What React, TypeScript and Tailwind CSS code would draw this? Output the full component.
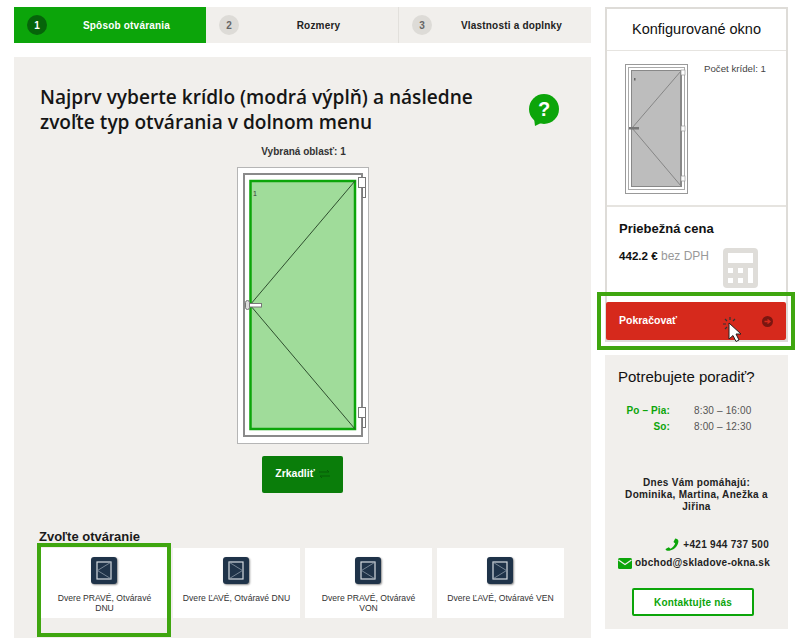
import React from "react";

const GREEN = "#0ca50a";

function Step({ n, label, active, wide }: { n: number; label: string; active?: boolean; wide?: boolean }) {
  return (
    <div className={active ? "flex items-center h-full w-[192px] pl-[13px] pt-[1px] bg-[#0ca50a] text-white" : wide ? "flex items-center h-full flex-1 pl-[13px] pt-[1px] bg-[#f1efec] text-[#222] border-l border-[#e2e0dc]" : "flex items-center h-full w-[192px] pl-[13px] pt-[1px] bg-[#f1efec] text-[#222]"}>
      <div className={active ? "w-[20px] h-[20px] rounded-full bg-[#06640a] flex items-center justify-center text-[10px] font-bold text-white" : "w-[20px] h-[20px] rounded-full bg-[#dddbd7] flex items-center justify-center text-[10px] font-bold text-[#666]"}>{n}</div>
      <div className="flex-1 text-center text-[10px] font-bold tracking-[0.2px]">{label}</div>
    </div>
  );
}

function BigDoor() {
  return (
    <svg width="132" height="277" viewBox="0 0 132 277" className="block">
      <rect x="0.5" y="0.5" width="131" height="276" fill="#fff" stroke="#b5b5b5" />
      <rect x="7" y="7" width="118" height="262" fill="#fff" stroke="#8a8a8a" strokeWidth="2" />
      <rect x="13.5" y="14" width="104.5" height="248" fill="#a0dc9a" stroke="#0ca50a" strokeWidth="2.5" />
      <path d="M118 14 L13 138 L118 262" fill="none" stroke="#2f4f2f" strokeWidth="1" />
      <text x="16" y="29" fontSize="7" fill="#333" fontFamily="Liberation Sans">1</text>
      <rect x="121.5" y="10.5" width="7" height="10" fill="#fff" stroke="#777" />
      <rect x="125.5" y="20.5" width="3" height="10" fill="#fff" stroke="#777" />
      <rect x="121.5" y="240.5" width="7" height="10" fill="#fff" stroke="#777" />
      <rect x="125.5" y="250.5" width="3" height="10" fill="#fff" stroke="#777" />
      <rect x="8.5" y="136.5" width="16" height="3.5" fill="#fff" stroke="#777" />
      <rect x="8.5" y="133.5" width="4" height="9" rx="2" fill="#ddd" stroke="#777" />
    </svg>
  );
}

function MiniDoor() {
  return (
    <svg width="64" height="130" viewBox="0 0 64 130" className="block">
      <rect x="0.5" y="0.5" width="62" height="129" fill="#fff" stroke="#999" />
      <rect x="3.5" y="3.5" width="56" height="122" fill="#fff" stroke="#aaa" />
      <rect x="6.5" y="6.5" width="50" height="116" fill="#bdbdbd" stroke="#888" />
      <path d="M56 7 L7 64 L56 122" fill="none" stroke="#777" strokeWidth="0.8" />
      <rect x="4" y="63" width="10" height="2.5" fill="#777" />
      <rect x="55" y="7" width="2" height="115" fill="#888" />
      <rect x="56" y="6" width="4" height="5" fill="#fff" stroke="#999" strokeWidth="0.7" />
      <rect x="56" y="62" width="4" height="5" fill="#fff" stroke="#999" strokeWidth="0.7" />
      <rect x="56" y="112" width="4" height="5" fill="#fff" stroke="#999" strokeWidth="0.7" />
      <rect x="9" y="14" width="1.5" height="2.5" fill="#666" />
    </svg>
  );
}

function TypeIcon({ left }: { left: boolean }) {
  return (
    <div className="-ml-[2px] w-[26px] h-[27px] rounded-[3px] bg-[#1f3349] shadow-[1px_1px_2px_rgba(0,0,0,0.45)] flex items-center justify-center">
      <svg width="16" height="19" viewBox="0 0 16 19">
        <rect x="1" y="1" width="14" height="17" fill="none" stroke="#d5dbe0" strokeWidth="1.2" />
        {left ? (
          <path d="M14.5 1.5 L1.5 9.5 L14.5 17.5" fill="none" stroke="#8a98a6" strokeWidth="0.8" />
        ) : (
          <path d="M1.5 1.5 L14.5 9.5 L1.5 17.5" fill="none" stroke="#8a98a6" strokeWidth="0.8" />
        )}
      </svg>
    </div>
  );
}

function TypeCard({ label, left }: { label: string; left: boolean }) {
  return (
    <div className="w-[127px] h-[70px] bg-white flex flex-col items-center pt-[9px]">
      <TypeIcon left={left} />
      <div className="mt-[9px] px-[9px] text-center text-[8.6px] leading-[10px] text-[#333]">{label}</div>
    </div>
  );
}

export default function App() {
  return (
    <div className="relative w-[800px] h-[638px] overflow-hidden bg-white flex pl-[14px] pt-[7px] font-['Liberation_Sans',Arial,sans-serif]">
      {/* Main column */}
      <div className="w-[577px] flex flex-col">
        <div className="flex h-[37px]">
          <Step n={1} label="Spôsob otvárania" active />
          <Step n={2} label="Rozmery" />
          <Step n={3} label="Vlastnosti a doplnky" wide />
        </div>
        <div className="mt-[14px] bg-[#f1efec] h-[600px] flex flex-col pt-[28px]">
          <div className="flex pl-[26px] pr-[32px]">
            <h1 className="w-[445px] text-[19.1px] leading-[25px] font-semibold text-[#151515] font-['Open_Sans',sans-serif]">
              Najprv vyberte krídlo (modrá výplň) a následne zvoľte typ otvárania v dolnom menu
            </h1>
            <div className="ml-auto mt-[9px] w-[30px] h-[32px] relative">
              <svg width="30" height="32" viewBox="0 0 30 32" className="block">
                <circle cx="15" cy="15" r="15" fill={GREEN} />
                <path d="M5 24 L6 32 L14 28 Z" fill={GREEN} />
                <text x="15" y="22" textAnchor="middle" fontSize="20" fontWeight="700" fill="#fff" fontFamily="Liberation Sans">?</text>
              </svg>
            </div>
          </div>
          <div className="mt-[11px] text-center text-[10px] leading-[12px] font-bold text-[#333] pl-[2px]">Vybraná oblasť: 1</div>
          <div className="mt-[9px] ml-[223px]">
            <BigDoor />
          </div>
          <div className="mt-[12px] ml-[248px] w-[81px] h-[37px] bg-[#0a7d0a] rounded-[2px] flex items-center justify-center gap-[4px] text-white text-[10.5px] font-bold">
            <span>Zrkadliť</span>
            <svg width="11" height="8" viewBox="0 0 11 8">
              <path d="M0 2 H10 M8 0 L10 2 M11 6 H1 M3 8 L1 6" fill="none" stroke="#065c06" strokeWidth="1" />
            </svg>
          </div>
          <div className="mt-[36px] ml-[25px] text-[13px] leading-[16px] font-bold text-[#1a1a1a]">Zvoľte otváranie</div>
          <div className="mt-[3px] ml-[27px] flex gap-[5px]">
            <TypeCard label="Dvere PRAVÉ, Otváravé DNU" left />
            <TypeCard label="Dvere ĽAVÉ, Otváravé DNU" left={false} />
            <TypeCard label="Dvere PRAVÉ, Otváravé VON" left />
            <TypeCard label="Dvere ĽAVÉ, Otváravé VEN" left={false} />
          </div>
        </div>
      </div>

      {/* Side column */}
      <div className="ml-[14px] w-[183px] flex flex-col">
        <div className="border-2 border-[#dedcd8] h-[335px] flex flex-col">
          <div className="h-[42px] flex items-center justify-center border-b border-[#e6e4e0] text-[14.5px] text-[#111]">Konfigurované okno</div>
          <div className="h-[156px] flex pl-[18px] pt-[13px] border-b-2 border-[#e6e4e0]">
            <MiniDoor />
            <div className="ml-[15px] -mt-[1px] text-[9.7px] leading-[12px] text-[#444]">Počet krídel: 1</div>
          </div>
          <div className="flex-1 flex flex-col relative">
            <div className="pl-[12px] pt-[14px] text-[13px] leading-[16px] font-bold text-[#111]">Priebežná cena</div>
            <div className="pl-[12px] mt-[12px] text-[12px] leading-[14px] text-[#999]">
              <span className="text-[11.6px] font-bold text-[#111]">442.2 €</span> bez DPH
            </div>
            <svg width="35" height="40" viewBox="0 0 35 40" className="absolute left-[116px] top-[41px]">
              <rect width="35" height="40" rx="4" fill="#dfddd9" />
              <rect x="5" y="5" width="25" height="10" fill="#fff" />
              <rect x="5" y="20" width="5" height="5" fill="#fff" />
              <rect x="15" y="20" width="5" height="5" fill="#fff" />
              <rect x="5" y="30" width="5" height="5" fill="#fff" />
              <rect x="15" y="30" width="5" height="5" fill="#fff" />
              <rect x="25" y="20" width="5" height="15" fill="#fff" />
            </svg>
            <div className="mt-auto -ml-[1px] h-[38px] bg-[#d6291c] rounded-[2px] flex items-center pl-[13px] pr-[13px] text-white text-[10.5px] font-bold">
              <span>Pokračovať</span>
              <svg width="11" height="11" viewBox="0 0 11 11" className="ml-auto">
                <circle cx="5.5" cy="5.5" r="5.5" fill="#7a1610" />
                <path d="M2.5 5.5 H7 M5.5 3.5 L8 5.5 L5.5 7.5" fill="none" stroke="#d6291c" strokeWidth="1.3" />
              </svg>
            </div>
          </div>
        </div>

        <div className="mt-[13px] h-[274px] bg-[#f1efec] flex flex-col">
          <div className="pl-[13px] pt-[13px] text-[15px] leading-[17px] text-[#111]">Potrebujete poradiť?</div>
          <div className="mt-[20px] grid grid-cols-[65px_1fr] gap-x-[24px] gap-y-[5px] text-[10px] leading-[11px] tracking-[0.15px]">
            <div className="text-right font-bold text-[#0ca50a]">Po – Pia:</div>
            <div className="text-[#555]">8:30 – 16:00</div>
            <div className="text-right font-bold text-[#0ca50a]">So:</div>
            <div className="text-[#555]">8:00 – 12:30</div>
          </div>
          <div className="mt-[45px] px-[14px] text-center text-[10px] leading-[12px] font-bold text-[#222] tracking-[0.3px]">
            Dnes Vám pomáhajú:<br />Dominika, Martina, Anežka a Jiřina
          </div>
          <div className="mt-[25px] pr-[19px] flex items-center justify-end gap-[4px] text-[10px] leading-[14px] font-bold text-[#222] tracking-[0.3px]">
            <svg width="14" height="14" viewBox="0 0 24 24" fill={GREEN}>
              <path d="M4 22 C2.5 22 1 20.5 1 19 L6.5 16 L9.5 18.5 C13 16.5 16 13 17.5 9.5 L14.5 7 L17.5 1 C20 1 23 3 23 5.5 C23 14 14 22 4 22 Z" />
            </svg>
            <span>+421 944 737 500</span>
          </div>
          <div className="mt-[4px] pl-[13px] flex items-center gap-[3px] text-[10px] leading-[14px] font-bold text-[#222] tracking-[0.25px]">
            <svg width="14" height="11" viewBox="0 0 14 11">
              <rect width="14" height="11" rx="1.5" fill={GREEN} />
              <path d="M0.5 2 L7 6.5 L13.5 2" fill="none" stroke="#f1efec" strokeWidth="1.2" />
            </svg>
            <span>obchod@skladove-okna.sk</span>
          </div>
          <div className="mt-[18px] ml-[27px] w-[122px] h-[28px] bg-white border-2 border-[#0ca50a] rounded-[2px] flex items-center justify-center text-[10px] font-bold text-[#0ca50a] tracking-[0.2px]">Kontaktujte nás</div>
        </div>
      </div>

      {/* Selection highlights and cursor over the content */}
      <div className="absolute left-[37px] top-[543px] w-[134px] h-[94px] border-4 border-[#3fa60f]" />
      <div className="absolute left-[597px] top-[292px] w-[198px] h-[58px] border-4 border-[#3fa60f]" />
      <svg width="26" height="30" viewBox="0 0 26 30" className="absolute left-[722px] top-[316px]">
        <g stroke="#333" strokeWidth="1.2">
          <path d="M8 1 V4 M3 3 L5 5 M1 8 H4 M13 3 L11 5 M3 13 L5 11" />
        </g>
        <path d="M7 7 V23 L11 19.5 L14 25.5 L17 24 L14 18 L19 18 Z" fill="#fff" stroke="#222" strokeWidth="1" />
      </svg>
    </div>
  );
}
